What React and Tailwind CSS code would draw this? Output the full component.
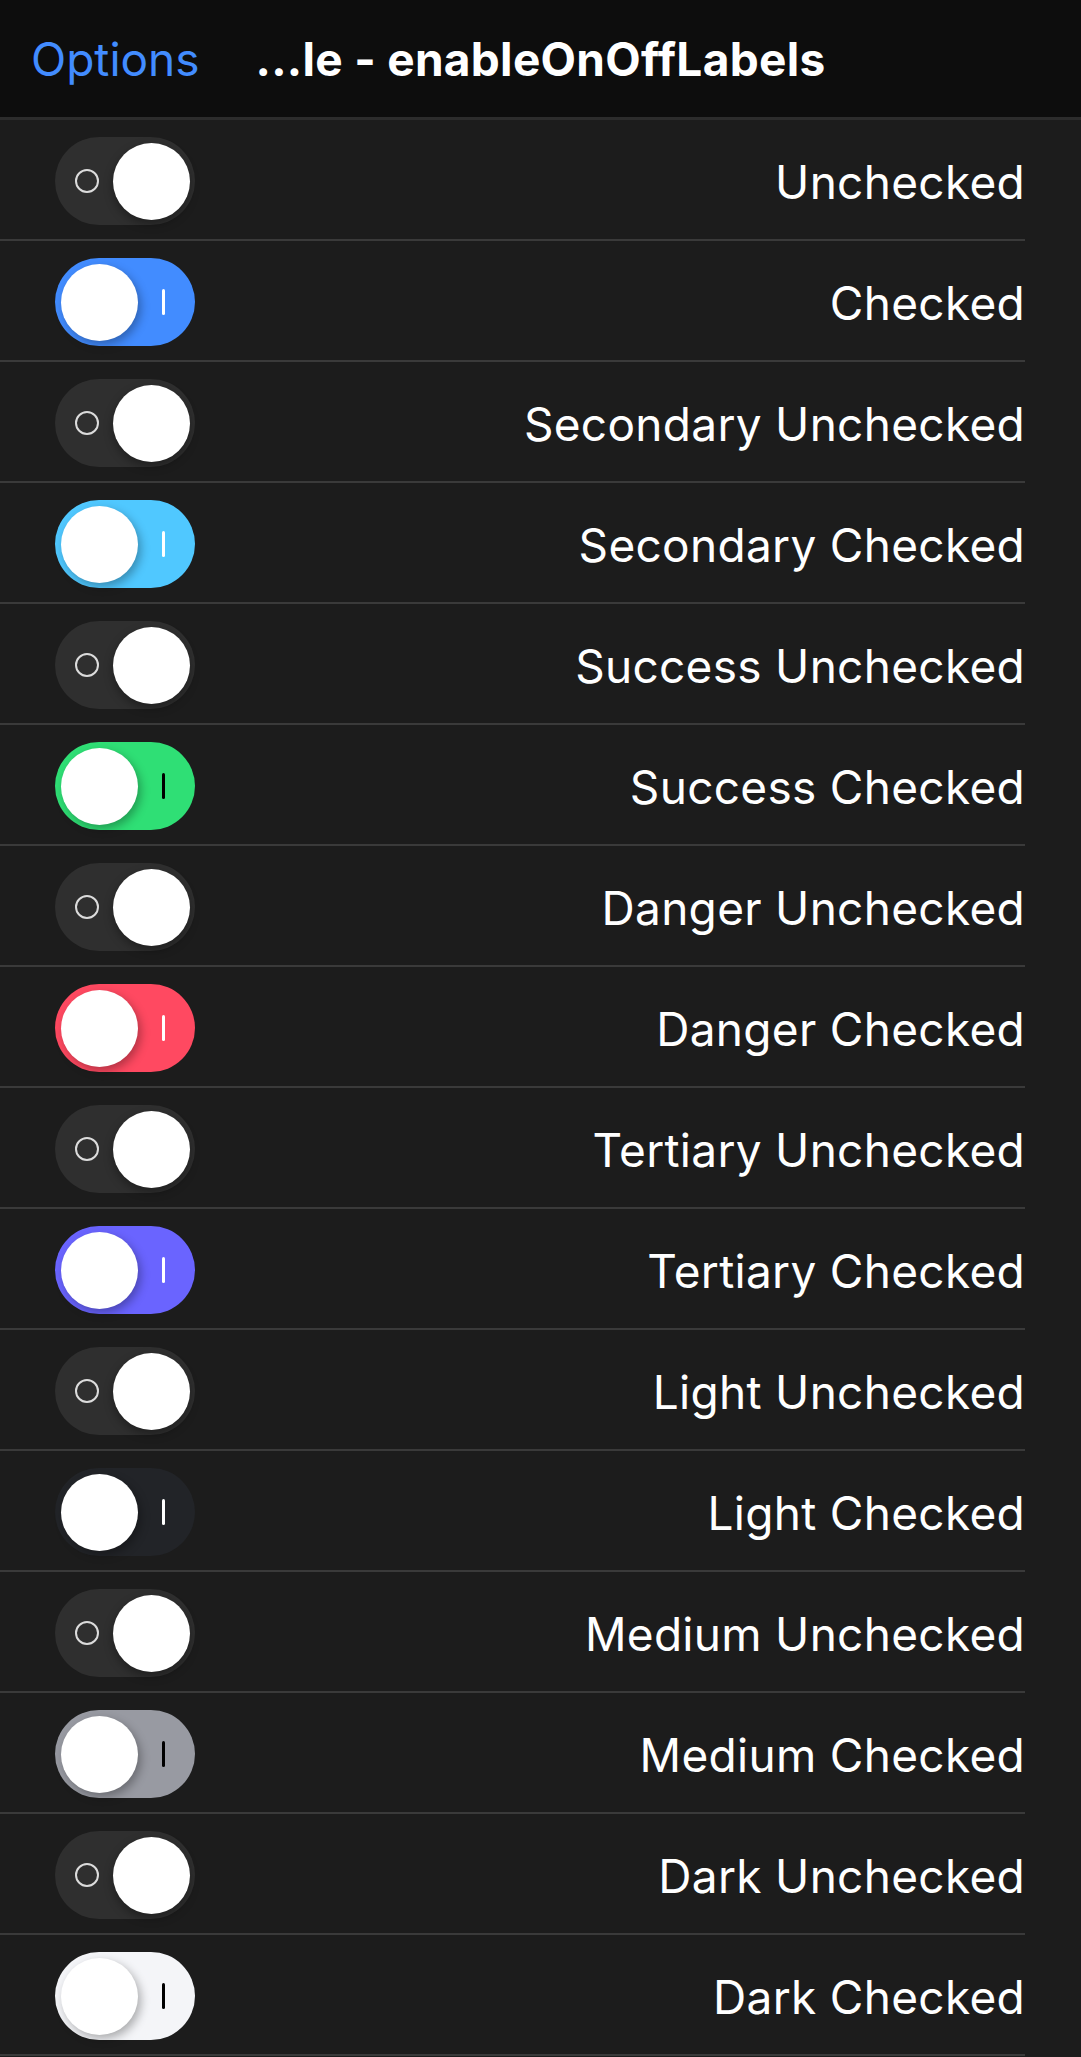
import React from "react";

const rows = [
  { label: "Unchecked" },
  { label: "Checked", track: "bg-[#428cff]", bar: "bg-white" },
  { label: "Secondary Unchecked" },
  { label: "Secondary Checked", track: "bg-[#50c8ff]", bar: "bg-white" },
  { label: "Success Unchecked" },
  { label: "Success Checked", track: "bg-[#2fdf75]", bar: "bg-black" },
  { label: "Danger Unchecked" },
  { label: "Danger Checked", track: "bg-[#ff4961]", bar: "bg-white" },
  { label: "Tertiary Unchecked" },
  { label: "Tertiary Checked", track: "bg-[#6a64ff]", bar: "bg-white" },
  { label: "Light Unchecked" },
  { label: "Light Checked", track: "bg-[#222428]", bar: "bg-white" },
  { label: "Medium Unchecked" },
  { label: "Medium Checked", track: "bg-[#989aa2]", bar: "bg-black" },
  { label: "Dark Unchecked" },
  { label: "Dark Checked", track: "bg-[#f4f5f8]", bar: "bg-black" },
];

function Toggle({ track, bar }) {
  if (!track) {
    return (
      <div className="flex h-[88px] w-[140px] shrink-0 items-center justify-between rounded-full bg-[#2f2f2f] pl-[20px] pr-[5px]">
        <div className="h-[24px] w-[24px] rounded-full border-2 border-[#dcdcdc]" />
        <div className="h-[77px] w-[77px] rounded-full bg-white shadow-[0_4px_10px_rgba(0,0,0,0.35)]" />
      </div>
    );
  }
  return (
    <div className={`flex h-[88px] w-[140px] shrink-0 items-center justify-between rounded-full pl-[6px] pr-[30px] ${track}`}>
      <div className="h-[77px] w-[77px] rounded-full bg-white shadow-[3px_4px_10px_rgba(0,0,0,0.3)]" />
      <div className={`h-[26px] w-[3px] rounded-full ${bar}`} />
    </div>
  );
}

export default function App() {
  return (
    <div className="min-h-[2057px] bg-[#1c1c1c] text-white" style={{ fontFamily: "Inter, 'Noto Sans', sans-serif" }}>
      <div className="relative flex h-[120px] items-center border-b-[3px] border-[#2c2c2c] bg-[#0d0d0d] px-[31px] pt-[2px]">
        <span className="text-[46px] text-[#428cff]">Options</span>
        <span className="absolute left-0 right-0 text-center text-[46px] font-bold tracking-[0.3px]">...le - enableOnOffLabels</span>
      </div>
      {rows.map((r, i) => (
        <div key={i} className="pr-[56px]">
          <div className="flex h-[121px] items-center justify-between border-b-2 border-[#3a3a3a] pl-[55px] pt-[3px]">
            <Toggle track={r.track} bar={r.bar} />
            <span className="pt-[2px] text-[46px] tracking-[0.3px]">{r.label}</span>
          </div>
        </div>
      ))}
    </div>
  );
}
